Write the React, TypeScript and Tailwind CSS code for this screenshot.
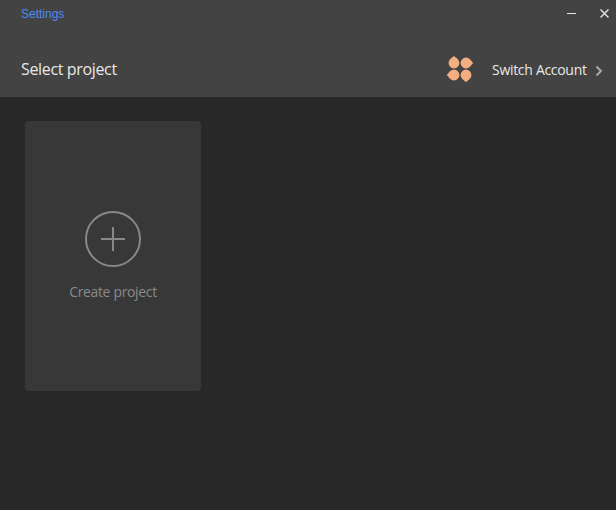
const PETAL = "M0 -7.3 C1.2 -5.4 5.4 -4 5.4 0 A5.4 5.4 0 0 1 -5.4 0 C-5.4 -4 -1.2 -5.4 0 -7.3Z";

function Petals() {
  return (
    <svg width="28" height="28" viewBox="0 0 28 28" fill="#f4ae80" className="shrink-0">
      <path d={PETAL} transform="translate(8 8)" />
      <path d={PETAL} transform="translate(20 8) rotate(90)" />
      <path d={PETAL} transform="translate(20 20) rotate(180)" />
      <path d={PETAL} transform="translate(8 20) rotate(270)" />
    </svg>
  );
}

function TitleBar() {
  return (
    <div className="flex h-7 items-center justify-between pl-[21px] pr-[7px]">
      <span className="font-['Liberation_Sans',sans-serif] text-xs text-[#4b8bf4]">Settings</span>
      <div className="flex items-center gap-6 pb-px">
        <button aria-label="Minimize">
          <svg width="9" height="9" className="block">
            <path d="M0 4.5H9" stroke="#e8e8e8" />
          </svg>
        </button>
        <button aria-label="Close">
          <svg width="9" height="9" className="block">
            <path d="M0.5 0.5L8.5 8.5M8.5 0.5L0.5 8.5" stroke="#dedede" strokeWidth="1.5" />
          </svg>
        </button>
      </div>
    </div>
  );
}

export default function App() {
  return (
    <div className="flex h-[510px] w-[616px] flex-col overflow-hidden bg-[#282828] font-['Open_Sans','Noto_Sans',sans-serif]">
      <header className="h-[97px] shrink-0 bg-[#434343]">
        <TitleBar />
        <div className="flex h-[69px] items-start justify-between pl-[21px] pr-[13px] pt-[27px]">
          <h1 className="text-base leading-7 tracking-[-0.35px] text-[#e8e8e8]">Select project</h1>
          <button className="flex items-start">
            <Petals />
            <span className="ml-[18px] mt-px w-[95px] whitespace-nowrap text-left text-sm leading-7 tracking-[-0.3px] text-[#e8e8e8]">
              Switch Account
            </span>
            <svg width="8" height="12" className="ml-[8px] mt-[10px]" fill="none">
              <path d="M1.5 1.5L6 6L1.5 10.5" stroke="#a8a8a8" strokeWidth="2" />
            </svg>
          </button>
        </div>
      </header>
      <main className="px-[25px] pt-6">
        <button className="flex h-[270px] w-44 flex-col items-center rounded bg-[#383838] pt-[89px]">
          <svg width="58" height="58" fill="none" stroke="#888888" strokeWidth="2">
            <circle cx="29" cy="29" r="27" />
            <path d="M17 29H41M29 17V41" />
          </svg>
          <span className="mt-[14px] whitespace-nowrap text-sm leading-5 tracking-[-0.35px] text-[#8a8a8a]">
            Create project
          </span>
        </button>
      </main>
    </div>
  );
}
